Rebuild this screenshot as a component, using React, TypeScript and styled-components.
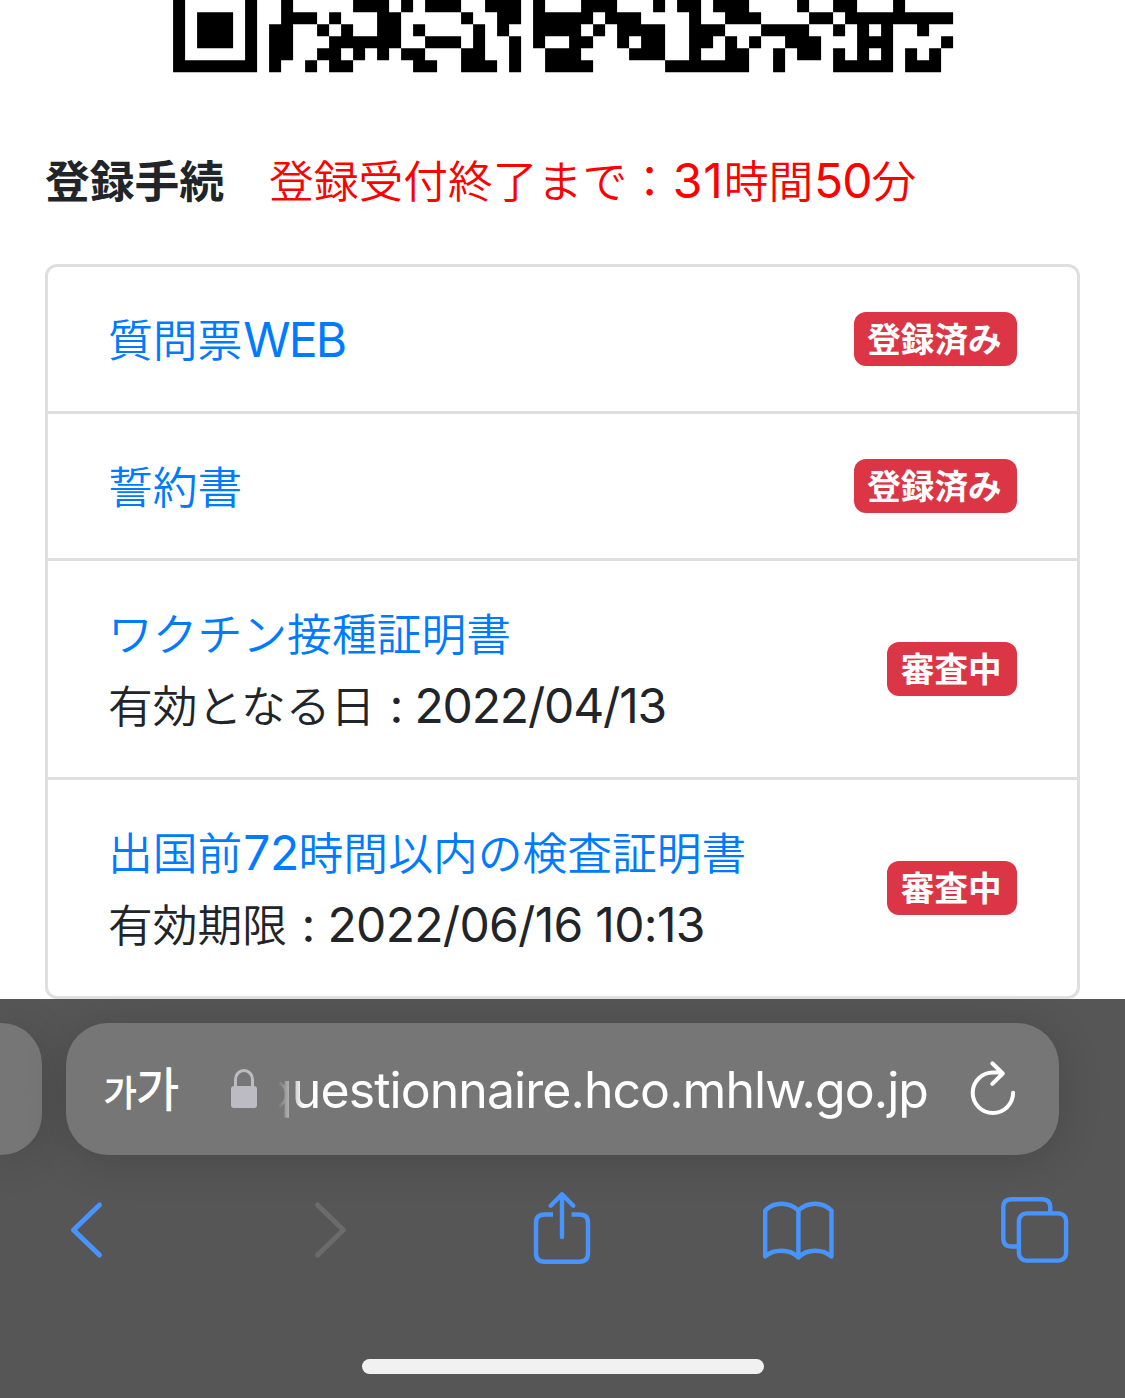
import React from "react";
import styled, { createGlobalStyle, css } from "styled-components";

const GlobalStyle = createGlobalStyle`
  *, *::before, *::after { box-sizing: border-box; }
  body {
    margin: 0;
    background: #fff;
    color: #212529;
    font-family: Inter, "Noto Sans CJK JP", sans-serif;
    font-size: 48px;
    line-height: 72px;
    overflow: hidden;
  }
`;

const Screen = styled.div`
  display: flex;
  flex-direction: column;
  width: 1125px;
  height: 1398px;
  overflow: hidden;
`;

const Page = styled.main`
  display: flex;
  flex-direction: column;
  height: 999px;
  padding: 0 45px;
`;

const QrCode = styled.svg`
  display: block;
  width: 783px;
  height: 73px;
  margin-left: 127px;
`;

const Heading = styled.h1`
  display: flex;
  gap: 44.8px;
  margin: 72px 0 47px;
  font-size: 48px;
  font-weight: 700;
  line-height: 72px;
  white-space: nowrap;
`;

const Deadline = styled.span`
  color: #f00;
  font-weight: 400;
`;

const Kana = styled.span<{ $light?: boolean }>`
  font-family: "Noto Sans CJK JP", sans-serif;
  font-size: 0.9333em;
  font-weight: ${(p) => (p.$light ? 350 : "inherit")};
  line-height: 1;
`;

const Latin = styled.span<{ $tracking: number; $lead: number }>`
  margin-left: ${(p) => p.$lead}px;
  font-weight: 380;
  letter-spacing: ${(p) => p.$tracking}px;
  white-space: pre;
`;

const List = styled.ul`
  margin: 0;
  padding: 0;
  list-style: none;
  border: 3px solid #dfdfdf;
  border-radius: 12px;
`;

const Item = styled.li`
  display: flex;
  align-items: center;
  justify-content: space-between;
  padding: 36px 60px;
  & + & { border-top: 3px solid #dfdfdf; }
`;

const Lines = styled.div`
  display: flex;
  flex-direction: column;
`;

const Line = styled.div`
  height: 72px;
  padding-top: 1px;
  line-height: 72px;
  white-space: nowrap;
`;

const Link = styled(Line).attrs({ as: "a" })`
  color: #007bff;
  text-decoration: none;
`;

const Badge = styled.span`
  display: flex;
  align-items: center;
  height: 54px;
  padding: 0 15.4px 2px 13.6px;
  border-radius: 12px;
  background: #dc3545;
  color: #fff;
  font-size: 36px;
  font-weight: 700;
  line-height: 36px;
  white-space: nowrap;
`;

const Browser = styled.footer`
  display: flex;
  flex-direction: column;
  height: 399px;
  padding-top: 24px;
  background: #565656;
  overflow: hidden;
`;

const Tabs = styled.div`
  display: flex;
  gap: 24px;
`;

const tabSurface = css`
  height: 132px;
  background: #767676;
  box-shadow: 0 6px 44px rgba(0, 0, 0, 0.16);
`;

const PreviousTab = styled.div`
  ${tabSurface}
  width: 42px;
  border-radius: 0 41px 41px 0;
`;

const AddressBar = styled.div`
  ${tabSurface}
  display: flex;
  align-items: center;
  width: 993px;
  padding: 0 43px 0 38px;
  border-radius: 42px;
  color: #fff;
`;

const TextSize = styled.button`
  display: flex;
  align-items: baseline;
  width: 76px;
  padding: 0 0 2px;
  border: 0;
  background: none;
  color: #fff;
  font-family: "Noto Sans CJK KR", sans-serif;
  font-weight: 300;
  line-height: 60px;
  stroke-linejoin: round;
  -webkit-text-stroke: 2px #fff;
`;

const Ga = styled.span<{ $size: number }>`
  font-size: ${(p) => p.$size}px;
`;

const Url = styled.div`
  display: flex;
  justify-content: flex-end;
  width: 651px;
  margin: 0 40px 0 20px;
  padding-top: 2px;
  overflow: hidden;
  font-size: 50px;
  font-weight: 380;
  letter-spacing: -0.95px;
  mask-image: linear-gradient(to right, transparent 0, #000 26px);
`;

const Icon = styled.svg`
  display: block;
  flex: none;
  fill: none;
  stroke: currentColor;
  stroke-linecap: round;
  stroke-linejoin: round;
  overflow: visible;
`;

const LockIcon = styled(Icon)`
  margin-left: 50px;
  color: #bcbbc3;
`;

const Toolbar = styled.nav`
  display: grid;
  grid-template-columns: 244px 220px 229px 238px 68px;
  height: 80px;
  margin-top: 35px;
  padding-left: 70px;
  color: #4894ff;
  stroke-width: 4.4;
`;

const Tool = styled.button<{ $off?: boolean }>`
  display: flex;
  padding: 0;
  border: 0;
  background: none;
  color: ${(p) => (p.$off ? "#6b6b6b" : "#4894ff")};
`;

const HomeIndicator = styled.div`
  width: 402px;
  height: 15px;
  margin: 89px auto 0 362px;
  border-radius: 8px;
  background: #f1f1f1;
`;

// Runs of dark modules per row as [first column, last column].
const qrRows: number[][][] = [
  [[0,0],[6,6],[9,9],[15,17],[19,19],[21,23],[26,28],[30,30],[34,36],[40,40],[42,43],[45,47],[52,52],[55,56],[60,60]],
  [[0,0],[2,4],[6,6],[9,11],[13,13],[17,18],[24,24],[27,28],[30,34],[36,38],[43,43],[46,48],[53,54],[56,64]],
  [[0,0],[2,4],[6,6],[8,9],[12,12],[14,14],[17,18],[20,20],[25,25],[27,27],[30,33],[35,35],[37,40],[43,45],[49,52],[55,55],[57,57],[59,59],[62,62]],
  [[0,0],[2,4],[6,6],[8,9],[13,18],[21,23],[25,25],[28,28],[30,30],[33,34],[37,37],[39,40],[43,44],[46,46],[48,48],[51,53],[57,59],[64,64]],
  [[0,0],[6,6],[8,9],[12,13],[15,15],[17,17],[19,20],[24,25],[28,28],[31,33],[38,40],[43,43],[46,47],[50,50],[52,53],[55,55],[57,57],[59,59],[61,61],[63,63]],
  [[0,6],[8,8],[11,11],[13,14],[20,21],[24,26],[28,28],[31,34],[41,47],[50,50],[55,59],[61,63]],
];

const qrPath = qrRows
  .flatMap((row, y) =>
    row.map(([a, b]) => {
      const width = (b - a + 1) * 12;
      const top = y === 0 ? -1 : y * 12 + 0.2;
      return `M${a * 12 + 1.1} ${top}h${width}V${y * 12 + 12.2}h-${width}z`;
    })
  )
  .join("");

type MixedProps = { text: string; light?: boolean; tracking?: number[]; lead?: number };

// Japanese runs are set slightly smaller than the Latin ones;
// tracking lists the letter spacing of each Latin run in turn.
function Mixed({ text, light, tracking = [], lead = 0 }: MixedProps) {
  let latin = 0;
  return (
    <>
      {text.split(/([\u3000-\u9fff\uff00-\uffef]+)/).filter(Boolean).map((run, i) =>
        /[\u3000-\u9fff\uff00-\uffef]/.test(run)
          ? <Kana key={i} $light={light}>{run}</Kana>
          : <Latin key={i} $tracking={tracking[latin++] ?? -1} $lead={lead}>{run}</Latin>
      )}
    </>
  );
}

type Procedure = {
  title: string;
  titleTracking?: number[];
  note?: string;
  noteTracking?: number[];
  status: string;
};

const items: Procedure[] = [
  { title: "質問票WEB", titleTracking: [-1.9], status: "登録済み" },
  { title: "誓約書", status: "登録済み" },
  { title: "ワクチン接種証明書", note: "有効となる日 : 2022/04/13", noteTracking: [-1.15], status: "審査中" },
  { title: "出国前72時間以内の検査証明書", titleTracking: [-0.6], note: "有効期限 : 2022/06/16 10:13", noteTracking: [-0.7], status: "審査中" },
];

export default function App() {
  return (
    <Screen>
      <GlobalStyle />
      <Page>
        <QrCode viewBox="0 0 783 73"><path d={qrPath} /></QrCode>
        <Heading>
          <span><Mixed text="登録手続" /></span>
          <Deadline><Mixed light lead={0.7} tracking={[1, -1]} text="登録受付終了まで：31時間50分" /></Deadline>
        </Heading>
        <List>
          {items.map((item) => (
            <Item key={item.title}>
              <Lines>
                <Link><Mixed light tracking={item.titleTracking} lead={1} text={item.title} /></Link>
                {item.note && <Line><Mixed light tracking={item.noteTracking} lead={1.7} text={item.note} /></Line>}
              </Lines>
              <Badge><Mixed text={item.status} /></Badge>
            </Item>
          ))}
        </List>
      </Page>
      <Browser>
        <Tabs>
          <PreviousTab />
          <AddressBar>
            <TextSize><Ga $size={35}>가</Ga><Ga $size={46}>가</Ga></TextSize>
            <LockIcon width="28" height="40" viewBox="0 0 28 40">
              <rect x="1" y="17" width="26" height="22" rx="3" fill="currentColor" stroke="none" />
              <path d="M5.5 18V10.5a8.5 9 0 0 1 17 0V18" strokeWidth="3" />
            </LockIcon>
            <Url>questionnaire.hco.mhlw.go.jp</Url>
            <Icon width="48" height="56" viewBox="-1.3 0.7 48 56" strokeWidth="4">
              <path d="M43.8 32.5A20.2 20.2 0 1 1 23.6 12.3H32M23 3L33.5 13.2L23 23.6" />
            </Icon>
          </AddressBar>
        </Tabs>
        <Toolbar>
          <Tool>
            <Icon width="34" height="80" viewBox="70 1190 34 80" strokeWidth="5"><path d="M99.5 1205L73.5 1230L99.5 1255" /></Icon>
          </Tool>
          <Tool $off>
            <Icon width="34" height="80" viewBox="314 1190 34 80" strokeWidth="5"><path d="M317.5 1205L343.5 1230L317.5 1255" /></Icon>
          </Tool>
          <Tool>
            <Icon width="57" height="80" viewBox="534 1190 57 80">
              <path strokeLinecap="butt" d="M553 1214.5H544.5Q536 1214.5 536 1223V1253Q536 1261.7 544.5 1261.7H579.5Q588 1261.7 588 1253V1223Q588 1214.5 579.5 1214.5H571.5" />
              <path d="M562 1237V1194.5M550.7 1205.7L562 1194.3L573.3 1205.7" />
            </Icon>
          </Tool>
          <Tool>
            <Icon width="71" height="80" viewBox="763 1190 71 80">
              <path d="M765.2 1256.5V1210.5Q772 1203.7 781.5 1203.7T798.4 1210.5Q805.5 1203.7 815 1203.7T831.5 1210.5V1256.5Q825 1250.7 815 1250.7T798.4 1257.5Q792 1250.7 781.5 1250.7T765.2 1256.5ZM798.4 1210.5V1257.5" />
            </Icon>
          </Tool>
          <Tool>
            <Icon width="68" height="80" viewBox="1001 1190 68 80">
              <path strokeLinecap="butt" d="M1019 1246.5H1011Q1003.3 1246.5 1003.3 1238.5V1207.5Q1003.3 1199.3 1011.3 1199.3H1042Q1050.3 1199.3 1050.3 1207.5V1213" />
              <rect x="1018.9" y="1213.4" width="47.2" height="47.2" rx="7.5" />
            </Icon>
          </Tool>
        </Toolbar>
        <HomeIndicator />
      </Browser>
    </Screen>
  );
}
